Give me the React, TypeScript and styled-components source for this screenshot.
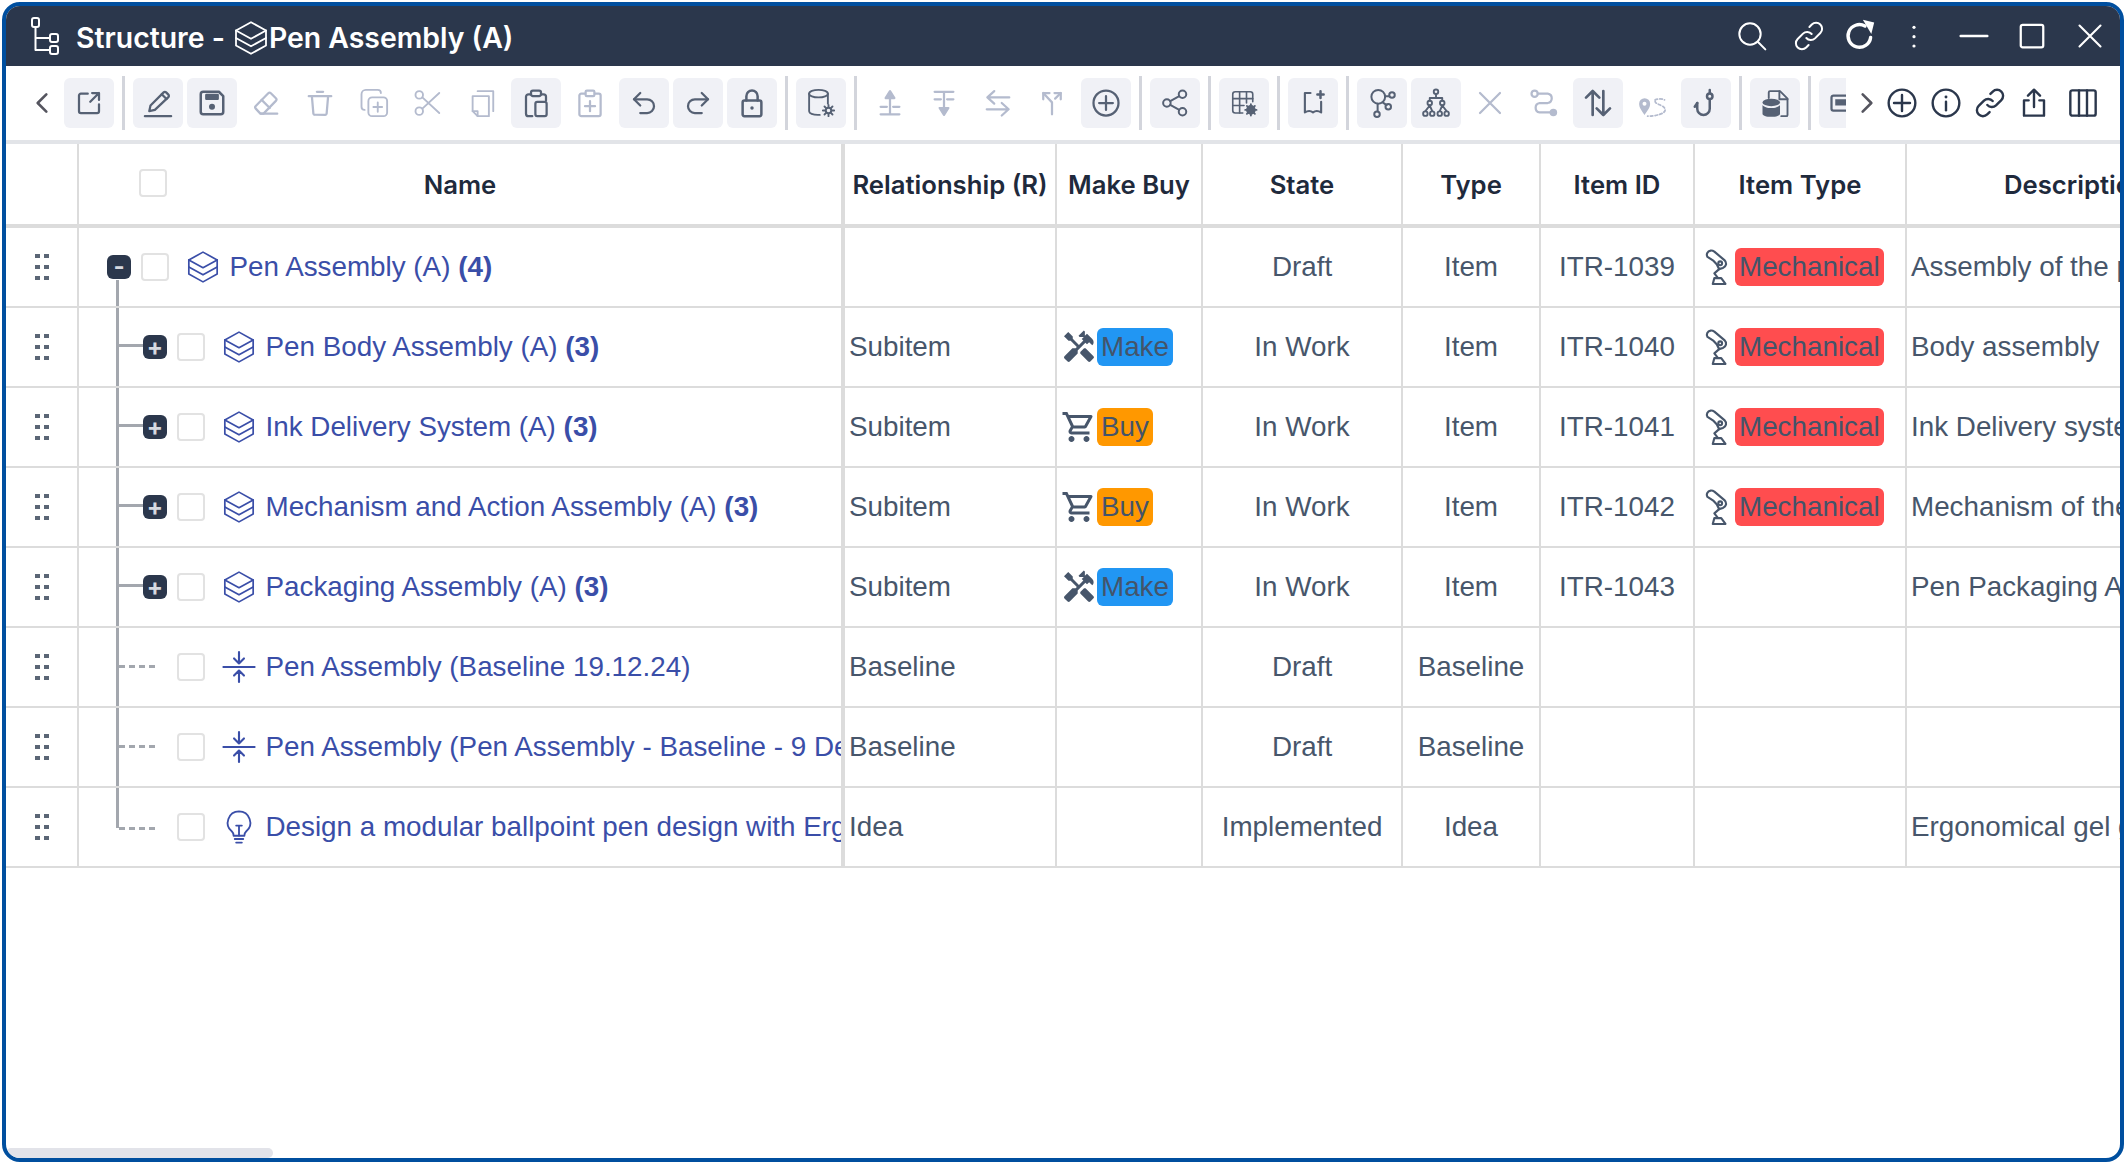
import React from 'react';
import styled, { createGlobalStyle } from 'styled-components';
import { MdHandyman, MdOutlineShoppingCart } from 'react-icons/md';

const GlobalStyle = createGlobalStyle`
  html, body { margin: 0; padding: 0; background: #fff; }
  * { box-sizing: border-box; }
`;

const Window = styled.div`
  width: 2122px;
  height: 1160px;
  margin: 2px 0 0 2px;
  border: 4px solid #004f9f;
  border-radius: 18px;
  background: #fff;
  overflow: hidden;
  position: relative;
  font-family: Inter, "Liberation Sans", sans-serif;
`;

const TitleBar = styled.div`
  height: 60px;
  background: #2b374c;
  color: #fff;
  display: flex;
  align-items: center;
  padding: 0 2px 0 24px;
`;

const TitleText = styled.div`
  display: flex;
  align-items: center;
  margin-left: 16px;
  padding-top: 3px;
  font-size: 28.4px;
  font-weight: 600;
  white-space: nowrap;
  gap: 8px;
`;

const TitleName = styled.span`
  display: flex;
  align-items: center;
`;

const TitleActions = styled.div`
  margin-left: auto;
  display: flex;
  align-items: center;
`;

const TitleAction = styled.div<{ $w: number }>`
  width: ${p => p.$w}px;
  display: flex;
  justify-content: center;
  align-items: center;
`;

const Toolbar = styled.div`
  height: 74px;
  display: flex;
  align-items: center;
`;

const BackChevron = styled.div`
  width: 58px;
  padding-left: 27px;
  color: #55555f;
  display: flex;
  align-items: center;
`;

const ToolStrip = styled.div`
  width: 1782px;
  flex: none;
  display: flex;
  align-items: center;
  gap: 4px;
  overflow: hidden;
`;

const ToolButton = styled.div<{ $active?: boolean }>`
  width: 50px;
  height: 50px;
  flex: none;
  border-radius: 6px;
  display: flex;
  align-items: center;
  justify-content: center;
  background: ${p => (p.$active ? '#f0f1f6' : 'transparent')};
  color: ${p => (p.$active ? '#566174' : '#b4bbce')};
`;

const ToolSep = styled.div`
  width: 3px;
  height: 54px;
  flex: none;
  margin: 0 4px;
  background: #d3d5dc;
`;

const RightTools = styled.div`
  display: flex;
  align-items: center;
  color: #2b374c;
`;

const NextChevron = styled.div`
  width: 26px;
  margin-left: 8px;
  display: flex;
  justify-content: center;
  color: #55555f;
`;

const RightTool = styled.div<{ $w?: number }>`
  width: ${p => p.$w ?? 44}px;
  display: flex;
  justify-content: center;
`;

const Band = styled.div`
  height: 4px;
  background: #e2e4e8;
`;

const TableArea = styled.div`
  width: 2300px;
`;

const columns = '73px 766px 212px 146px 200px 138px 154px 212px 399px';

const HeaderRow = styled.div`
  display: grid;
  grid-template-columns: ${columns};
  height: 84px;
  border-bottom: 4px solid #dcdcdc;
`;

const HeaderCell = styled.div<{ $thick?: boolean }>`
  display: flex;
  align-items: center;
  justify-content: center;
  font-size: 25.7px;
  font-weight: 600;
  color: #1f2a3c;
  white-space: nowrap;
  overflow: hidden;
  border-right: ${p => (p.$thick ? 4 : 2)}px solid #dcdcdc;
`;

const NameHeader = styled(HeaderCell)`
  display: grid;
  grid-template-columns: 1fr auto 1fr;
  align-items: center;
`;

const DescHeader = styled(HeaderCell)`
  justify-content: flex-start;
  padding-left: 97px;
  border-right: none;
`;

const Row = styled.div`
  display: grid;
  grid-template-columns: ${columns};
  height: 80px;
  border-bottom: 2px solid #dcdcdc;
`;

const Cell = styled.div<{ $align?: string }>`
  display: flex;
  align-items: center;
  justify-content: ${p => p.$align ?? 'flex-start'};
  min-width: 0;
  overflow: hidden;
  white-space: nowrap;
  font-family: "Liberation Sans", Arial, sans-serif;
  font-size: 27.8px;
  color: #47566b;
  border-right: 2px solid #dcdcdc;
`;

const HandleCell = styled(Cell)`
  justify-content: flex-start;
  padding-left: 29px;
  color: #5b6675;
`;

const NameCell = styled(Cell)<{ $depth: number }>`
  position: relative;
  border-right-width: 4px;
  padding-left: ${p => (p.$depth === 0 ? 28 : 64)}px;
`;

const PadCell = styled(Cell)`
  padding-left: 4px;
`;

const MakeCell = styled(Cell)`
  padding-left: 4px;
`;

const ItemTypeCell = styled(Cell)`
  padding-left: 9px;
  gap: 5px;
`;

const DescCell = styled(Cell)`
  padding-left: 4px;
  border-right: none;
`;

const Vertical = styled.div<{ $top: number; $h: number }>`
  position: absolute;
  left: 37px;
  top: ${p => p.$top}px;
  height: ${p => p.$h}px;
  width: 3px;
  background: #a3a7ae;
`;

const Branch = styled.div<{ $top: number; $dashed?: boolean }>`
  position: absolute;
  left: 40px;
  top: ${p => p.$top}px;
  height: 3px;
  width: ${p => (p.$dashed ? 36 : 24)}px;
  background: ${p =>
    p.$dashed
      ? 'repeating-linear-gradient(90deg, #a3a7ae 0 6px, transparent 6px 10px)'
      : '#a3a7ae'};
`;

const Expander = styled.div`
  width: 24px;
  height: 24px;
  flex: none;
  position: relative;
  z-index: 1;
  border-radius: 6px;
  background: #2b374c;
  color: #d6d9e0;
  display: flex;
  align-items: center;
  justify-content: center;
  font-family: Inter, sans-serif;
  font-size: 24px;
  font-weight: 700;
  line-height: 1;
`;

const ExpanderGap = styled.div`
  width: 24px;
  flex: none;
`;

const CheckBox = styled.div`
  width: 28px;
  height: 28px;
  flex: none;
  border: 2px solid #e2e2e2;
  border-radius: 4px;
  background: #fff;
`;

const RowCheck = styled(CheckBox)`
  margin-left: 10px;
`;

const HeaderCheck = styled(CheckBox)`
  margin: -2px 0 0 60px;
`;

const IconSlot = styled.div`
  width: 34px;
  flex: none;
  margin: 0 9.5px 0 17px;
  display: flex;
  justify-content: center;
  color: #3a4ea8;
`;

const NameLink = styled.span`
  color: #3a4ea8;
  b { font-weight: 700; }
`;

const Pill = styled.span<{ $bg: string }>`
  display: inline-flex;
  align-items: center;
  height: 38px;
  padding: 0 4px;
  border-radius: 6px;
  background: ${p => p.$bg};
  color: #44546a;
`;

const ScrollThumb = styled.div`
  position: absolute;
  left: 0;
  bottom: 0;
  width: 267px;
  height: 10px;
  border-radius: 5px;
  background: #e2e3e9;
`;

type GlyphProps = { size?: number; w?: number; children: React.ReactNode; vb?: string; sw?: number };

const Glyph = ({ size = 30, w, children, vb = '0 0 24 24', sw = 1.8 }: GlyphProps) => (
  <svg
    width={w ?? size}
    height={size}
    viewBox={vb}
    fill="none"
    stroke="currentColor"
    strokeWidth={sw}
    strokeLinecap="round"
    strokeLinejoin="round"
  >
    {children}
  </svg>
);

const dot = { fill: 'currentColor', stroke: 'none' };

const Layers = ({ size = 34 }: { size?: number }) => (
  <Glyph size={size} sw={1.2}>
    <path d="M12 1.5 22 7l-10 5.5L2 7z" />
    <path d="M2 7v5l10 5.5L22 12V7" />
    <path d="M2 12v5l10 5.5L22 17v-5" />
  </Glyph>
);

const icons: Record<string, React.ReactNode> = {
  external: (
    <Glyph>
      <path d="M11 4.5H5.5A1.5 1.5 0 0 0 4 6v12.5A1.5 1.5 0 0 0 5.5 20h13a1.5 1.5 0 0 0 1.5-1.5V13" />
      <path d="M13 11l7-7M14.5 4H20v5.5" />
    </Glyph>
  ),
  pencil: (
    <Glyph>
      <path d="M1.5 22.5h21" />
      <path d="M5 18.5l1-4.500L16.500 3.500a1.400 1.400 0 0 1 2 0l1.800 1.800a1.400 1.400 0 0 1 0 2L9.500 17.500z" />
      <path d="M15 5l3.800 3.800" />
    </Glyph>
  ),
  save: (
    <Glyph sw={2}>
      <path d="M5 3h12.500L21 6.500V19a2 2 0 0 1-2 2H5a2 2 0 0 1-2-2V5a2 2 0 0 1 2-2z" />
      <path d="M7.500 5.500h9v3h-9z" fill="currentColor" />
      <circle cx="12" cy="15" r="2.400" {...dot} />
    </Glyph>
  ),
  eraser: (
    <Glyph>
      <path d="M13.800 4.200a1.500 1.500 0 0 1 2.100 0l4 4a1.500 1.500 0 0 1 0 2.100L10 20.500H7.500l-3.700-4a1.500 1.500 0 0 1 0-2.100z" />
      <path d="M8.500 9.500l6.500 6.500M8 20.500h13" />
    </Glyph>
  ),
  trash: (
    <Glyph>
      <path d="M3 6.500h18M9.500 3h5" />
      <path d="M5.500 6.500l1.200 14a1 1 0 0 0 1 .9h8.600a1 1 0 0 0 1-.9l1.200-14" />
    </Glyph>
  ),
  copyPlus: (
    <Glyph sw={1.5}>
      <rect x="7.500" y="7.500" width="15" height="15" rx="3" />
      <path d="M4.500 17.500A2.500 2.500 0 0 1 2 15V5a3.500 3.500 0 0 1 3.500-3.500H15A2.500 2.500 0 0 1 17.500 4" />
      <path d="M15 11.500v7.500M11.500 15.200h7" />
    </Glyph>
  ),
  scissors: (
    <Glyph sw={1.5}>
      <circle cx="5" cy="5.500" r="3" />
      <circle cx="5" cy="18.500" r="3" />
      <path d="M7.500 7.500 21 20M7.500 16.500 21 4" />
    </Glyph>
  ),
  copy: (
    <Glyph sw={1.5}>
      <path d="M4.500 6.500h13v16h-9l-4-4z" />
      <path d="M8.500 22.500v-4h-4" />
      <path d="M8.500 2.500h12.500v16" />
    </Glyph>
  ),
  paste: (
    <Glyph>
      <path d="M8 5H6a2 2 0 0 0-2 2v13.500a2 2 0 0 0 2 2h3" />
      <path d="M16 5h2a2 2 0 0 1 2 2v3" />
      <rect x="8" y="2" width="8" height="4.500" rx="1.500" />
      <rect x="11.500" y="11" width="9" height="11.500" rx="1.500" />
    </Glyph>
  ),
  clipPlus: (
    <Glyph>
      <rect x="3.500" y="4.500" width="17" height="18" rx="1.500" />
      <rect x="8.500" y="2" width="7" height="4.500" rx="1" fill="#fff" />
      <path d="M12 10.500v8M8 14.500h8" />
    </Glyph>
  ),
  undo: (
    <Glyph>
      <path d="M9 14 4 9l5-5" />
      <path d="M4 9h10.500a5.500 5.500 0 0 1 0 11H9" />
    </Glyph>
  ),
  redo: (
    <Glyph>
      <path d="M15 14l5-5-5-5" />
      <path d="M20 9H9.500a5.500 5.500 0 0 0 0 11H15" />
    </Glyph>
  ),
  lock: (
    <Glyph sw={2}>
      <rect x="4.500" y="10" width="15" height="12.500" rx="1.500" />
      <path d="M7.500 10V6.500a4.500 4.500 0 0 1 9 0V10" />
      <circle cx="12" cy="16" r="1.400" {...dot} />
    </Glyph>
  ),
  dbGear: (
    <Glyph sw={1.5}>
      <ellipse cx="10" cy="4.500" rx="7.500" ry="3" />
      <path d="M2.500 4.500v14c0 1.700 3 3 7 3h1.500" />
      <path d="M17.500 4.500v8" />
      <circle cx="18" cy="18" r="2.200" />
      <path d="M18 13.500v2M18 20.500v2M13.500 18h2M20.500 18h2M14.800 14.800l1.500 1.500M19.700 19.700l1.500 1.500M14.800 21.200l1.500-1.500M19.700 16.300l1.500-1.500" />
    </Glyph>
  ),
  insertUp: (
    <Glyph>
      <path d="M12 2.500 8.500 8h7z" fill="currentColor" />
      <path d="M12 8v13M4.500 21h15M4.500 15h5M14.500 15h5" />
    </Glyph>
  ),
  insertDown: (
    <Glyph>
      <path d="M12 21.500 8.500 16h7z" fill="currentColor" />
      <path d="M12 16V3M4.500 3h15M4.500 9h5M14.500 9h5" />
    </Glyph>
  ),
  swap: (
    <Glyph>
      <path d="M9 2.500 3.500 7.500 9 12.500M3.500 7.500H21" />
      <path d="M15 12l5.500 5-5.500 5M20.500 17H3" />
    </Glyph>
  ),
  fork: (
    <Glyph>
      <path d="M5 9V4h5M19 9V4h-5" />
      <path d="M5 4l7 7.500V21M19 4l-4.500 4.500" />
    </Glyph>
  ),
  circlePlus: (
    <Glyph>
      <circle cx="12" cy="12" r="10" />
      <path d="M12 6.500v11M6.500 12h11" />
    </Glyph>
  ),
  share: (
    <Glyph sw={1.6}>
      <circle cx="18" cy="5" r="3" />
      <circle cx="5.500" cy="12" r="3" />
      <circle cx="18" cy="19" r="3" />
      <path d="M8.200 10.500l7.200-4M8.200 13.500l7.200 4" />
    </Glyph>
  ),
  gridGear: (
    <Glyph sw={1.3}>
      <path d="M11 20H5a2 2 0 0 1-2-2V5a2 2 0 0 1 2-2h12a2 2 0 0 1 2 2v6" />
      <path d="M3 8.500h16M3 14h9M8.500 3v17M14 3v9" />
      <circle cx="17.500" cy="17.500" r="3.200" fill="currentColor" />
      <path d="M17.500 13v9M13 17.500h9M14.300 14.300l6.400 6.400M14.300 20.700l6.400-6.400" strokeWidth="1.500" />
    </Glyph>
  ),
  bookmark: (
    <Glyph sw={1.7}>
      <path d="M10 4H5.500V19.500c2.500-1.500 4.500-1.500 6.500 0 2-1.500 4-1.500 6.500 0V11" />
      <path d="M18 2.500v5.500M15.500 5.200h5" strokeWidth="2" />
    </Glyph>
  ),
  graph: (
    <Glyph sw={1.6}>
      <circle cx="9" cy="7" r="5.500" />
      <circle cx="20" cy="5.500" r="2.200" />
      <circle cx="17" cy="15" r="2.200" />
      <circle cx="8" cy="21" r="2.200" />
      <path d="M14.500 6.500h3.300M12.500 11.500l3.200 2.200M8.500 12.500v6" />
    </Glyph>
  ),
  hierarchy: (
    <Glyph sw={1.5}>
      <circle cx="12" cy="3" r="1.800" />
      <circle cx="7" cy="12" r="1.800" />
      <circle cx="17" cy="12" r="1.800" />
      <circle cx="3.500" cy="20.500" r="1.800" />
      <circle cx="9" cy="20.500" r="1.800" />
      <circle cx="15" cy="20.500" r="1.800" />
      <circle cx="20.500" cy="20.500" r="1.800" />
      <path d="M12 5v3M7 10V8h10v2M7 14l-3.500 4.500M7 14l2 4.500M17 14l-2 4.500M17 14l3.500 4.500" />
    </Glyph>
  ),
  cross: (
    <Glyph>
      <path d="M4 4l16 16M20 4 4 20" />
    </Glyph>
  ),
  route: (
    <Glyph>
      <circle cx="4.500" cy="4.500" r="2.500" />
      <path d="M7 4.500h8a3.800 3.800 0 0 1 0 7.500H8.500a3.800 3.800 0 0 0 0 7.500H18" />
      <circle cx="19.500" cy="19.500" r="3" {...dot} />
    </Glyph>
  ),
  upDown: (
    <Glyph size={32} sw={2}>
      <path d="M8 21V3M3 8l5-5 5 5" />
      <path d="M16 3v18M11 16l5 5 5-5" />
    </Glyph>
  ),
  pin: (
    <Glyph sw={1.4}>
      <path d="M6 21.500C3.500 17.500 1.700 15.500 1.700 12.500a4.400 4.400 0 0 1 8.800 0c0 3-1.800 5-4.500 9z" fill="currentColor" stroke="none" />
      <circle cx="6" cy="12.500" r="1.600" fill="#fff" stroke="none" />
      <path d="M14.500 9.500c2.500-1 5.500-1 7.500 0M14.500 10.500c0 3 8 3 8 7 0 3-7 5-14 5" strokeDasharray="2 1.800" />
    </Glyph>
  ),
  hook: (
    <Glyph sw={2}>
      <path d="M15 9v7.500a5 5 0 0 1-10 0V12" />
      <path d="M5 12l-2 3" />
      <circle cx="15" cy="6.500" r="2.200" />
      <path d="M15 1.500v2.500" />
    </Glyph>
  ),
  dbDoc: (
    <Glyph sw={1.5}>
      <path d="M7 8V3.500a1 1 0 0 1 1-1h8l6 6v13a1 1 0 0 1-1 1h-4" />
      <path d="M15.500 2.500V9H22" />
      <ellipse cx="9" cy="11.500" rx="7" ry="3" fill="currentColor" stroke="none" />
      <path d="M2 13.500v7c0 1.500 3 2.500 7 2.500s7-1 7-2.500v-7c-1 1.500-4 2.500-7 2.500s-6-1-7-2.500z" fill="currentColor" stroke="none" />
    </Glyph>
  ),
  panel: (
    <Glyph sw={1.8}>
      <rect x="2" y="6" width="19" height="12" rx="1.500" />
      <rect x="5" y="9" width="16" height="5" fill="currentColor" stroke="none" />
      <path d="M24 2v3M24 19v3" />
    </Glyph>
  ),
};

const tools: (string | [string, boolean])[] = [
  ['external', true], '|',
  ['pencil', true], ['save', true], ['eraser', false], ['trash', false], ['copyPlus', false],
  ['scissors', false], ['copy', false], ['paste', true], ['clipPlus', false],
  ['undo', true], ['redo', true], ['lock', true], '|',
  ['dbGear', true], '|',
  ['insertUp', false], ['insertDown', false], ['swap', false], ['fork', false], ['circlePlus', true], '|',
  ['share', true], '|',
  ['gridGear', true], '|',
  ['bookmark', true], '|',
  ['graph', true], ['hierarchy', true], ['cross', false], ['route', false], ['upDown', true],
  ['pin', false], ['hook', true], '|',
  ['dbDoc', true], '|',
  ['panel', true],
];

const Chevron = ({ dir }: { dir: 'left' | 'right' }) => (
  <Glyph size={26} w={18} vb="0 0 14 24" sw={2.4}>
    <path d={dir === 'left' ? 'M11 4 3 12l8 8' : 'M3 4l8 8-8 8'} />
  </Glyph>
);

const DragHandle = () => (
  <svg width="14" height="26" viewBox="0 0 14 26" fill="currentColor">
    {[0, 11, 22].map(y => (
      <React.Fragment key={y}>
        <rect x="0" y={y} width="5" height="4" />
        <rect x="9" y={y} width="5" height="4" />
      </React.Fragment>
    ))}
  </svg>
);

const StructureIcon = () => (
  <svg width="30" height="38" viewBox="0 0 30 38" fill="none" stroke="#fff" strokeWidth="2" strokeLinejoin="round">
    <rect x="2" y="1" width="7" height="9" rx="2" />
    <path d="M5.500 10v23H20M5.500 21H20" />
    <rect x="20" y="17" width="8" height="8" rx="2" />
    <rect x="20" y="29" width="8" height="8" rx="2" />
  </svg>
);

const BaselineIcon = () => (
  <Glyph size={34} sw={1.5}>
    <path d="M1 12h22M12 1.500v8M8.500 6l3.500 3.500L15.500 6M12 22.500V15M8.500 18l3.500-3.500 3.500 3.500" />
  </Glyph>
);

const BulbIcon = () => (
  <Glyph size={34} sw={1.3}>
    <path d="M12 1a8 8 0 0 0-5 14.200c.8.700 1.200 1.500 1.200 3h7.600c0-1.500.4-2.300 1.200-3A8 8 0 0 0 12 1z" />
    <path d="M9 20.500h6M10 23h4M12 18v-7M10 11h4" />
  </Glyph>
);

const RobotArm = () => (
  <svg width="26" height="36" viewBox="0 0 24 34" fill="none" stroke="#47566b" strokeWidth="2" strokeLinejoin="round">
    <path d="M3 7.500C1.500 5 3 2 6 1.500c1.500-.2 2.500.3 3.500 1L19 10.500c2.500 2.500 2 6-1.500 7.500L14 19c-1-3-3-6-5.500-8z" />
    <circle cx="15" cy="13.500" r="1.800" />
    <path d="M14 19l-4.500 4 3.500 4.500" />
    <path d="M8 33l1.500-5.500h6.500L20 33z" />
  </svg>
);

type RowData = {
  name: string;
  count?: number;
  kind: 'layers' | 'baseline' | 'idea';
  depth: number;
  rel?: string;
  make?: 'Make' | 'Buy';
  state: string;
  type: string;
  id?: string;
  mech?: boolean;
  desc?: string;
};

const rows: RowData[] = [
  { name: 'Pen Assembly (A)', count: 4, kind: 'layers', depth: 0, state: 'Draft', type: 'Item', id: 'ITR-1039', mech: true, desc: 'Assembly of the pen' },
  { name: 'Pen Body Assembly (A)', count: 3, kind: 'layers', depth: 1, rel: 'Subitem', make: 'Make', state: 'In Work', type: 'Item', id: 'ITR-1040', mech: true, desc: 'Body assembly' },
  { name: 'Ink Delivery System (A)', count: 3, kind: 'layers', depth: 1, rel: 'Subitem', make: 'Buy', state: 'In Work', type: 'Item', id: 'ITR-1041', mech: true, desc: 'Ink Delivery system' },
  { name: 'Mechanism and Action Assembly (A)', count: 3, kind: 'layers', depth: 1, rel: 'Subitem', make: 'Buy', state: 'In Work', type: 'Item', id: 'ITR-1042', mech: true, desc: 'Mechanism of the pen' },
  { name: 'Packaging Assembly (A)', count: 3, kind: 'layers', depth: 1, rel: 'Subitem', make: 'Make', state: 'In Work', type: 'Item', id: 'ITR-1043', desc: 'Pen Packaging Assembly' },
  { name: 'Pen Assembly (Baseline 19.12.24)', kind: 'baseline', depth: 1, rel: 'Baseline', state: 'Draft', type: 'Baseline' },
  { name: 'Pen Assembly (Pen Assembly - Baseline - 9 Dec 24)', kind: 'baseline', depth: 1, rel: 'Baseline', state: 'Draft', type: 'Baseline' },
  { name: 'Design a modular ballpoint pen design with Ergonomic grip', kind: 'idea', depth: 1, rel: 'Idea', state: 'Implemented', type: 'Idea', desc: 'Ergonomical gel grip' },
];

const TreeLines = ({ index, row }: { index: number; row: RowData }) => {
  const last = index === rows.length - 1;
  if (index === 0) return <Vertical $top={52} $h={28} />;
  return (
    <>
      <Vertical $top={-1} $h={last ? 41 : 81} />
      <Branch $top={last ? 39 : row.count ? 36 : 37} $dashed={!row.count} />
    </>
  );
};

const App: React.FC = () => (
  <>
    <GlobalStyle />
    <Window>
      <TitleBar>
        <StructureIcon />
        <TitleText>
          Structure -
          <TitleName>
            <Layers size={36} />
            Pen Assembly (A)
          </TitleName>
        </TitleText>
        <TitleActions>
          <TitleAction $w={56}>
            <Glyph size={32} sw={1.5}>
              <circle cx="10.500" cy="10.500" r="8" />
              <path d="M16.500 16.500 22 22" />
            </Glyph>
          </TitleAction>
          <TitleAction $w={58}>
            <Glyph size={32} sw={1.5}>
              <path d="M10 13.500a4.500 4.500 0 0 0 6.500.3l4-4a4.500 4.500 0 0 0-6.400-6.400l-1.800 1.800" />
              <path d="M14 10.500a4.500 4.500 0 0 0-6.500-.3l-4 4a4.500 4.500 0 0 0 6.400 6.400l1.800-1.800" />
            </Glyph>
          </TitleAction>
          <TitleAction $w={44}>
            <Glyph size={34} sw={2.4}>
              <path d="M19.500 13a8 8 0 1 1-4-8" />
              <path d="M14 .5 22 2.500 20 10.500z" fill="#fff" stroke="none" />
            </Glyph>
          </TitleAction>
          <TitleAction $w={64}>
            <Glyph size={32}>
              <circle cx="12" cy="5.500" r="1.200" fill="#fff" stroke="none" />
              <circle cx="12" cy="12.500" r="1.200" fill="#fff" stroke="none" />
              <circle cx="12" cy="19.500" r="1.200" fill="#fff" stroke="none" />
            </Glyph>
          </TitleAction>
          <TitleAction $w={56}>
            <Glyph size={32}>
              <path d="M2 12h20" />
            </Glyph>
          </TitleAction>
          <TitleAction $w={60}>
            <Glyph size={30}>
              <rect x="3" y="3" width="18" height="18" rx="1.500" />
            </Glyph>
          </TitleAction>
          <TitleAction $w={56}>
            <Glyph size={28}>
              <path d="M3 3l18 18M21 3 3 21" />
            </Glyph>
          </TitleAction>
        </TitleActions>
      </TitleBar>

      <Toolbar>
        <BackChevron>
          <Chevron dir="left" />
        </BackChevron>
        <ToolStrip>
          {tools.map((t, i) =>
            t === '|' ? (
              <ToolSep key={i} />
            ) : (
              <ToolButton key={i} $active={(t as [string, boolean])[1]}>
                {icons[(t as [string, boolean])[0]]}
              </ToolButton>
            )
          )}
        </ToolStrip>
        <RightTools>
          <NextChevron>
            <Chevron dir="right" />
          </NextChevron>
          <RightTool>
            <Glyph size={32}>
              <circle cx="12" cy="12" r="10" />
              <path d="M12 6v12M6 12h12" />
            </Glyph>
          </RightTool>
          <RightTool>
            <Glyph size={32}>
              <circle cx="12" cy="12" r="10" />
              <path d="M12 11v6.500" />
              <circle cx="12" cy="7.500" r="1.100" fill="currentColor" stroke="none" />
            </Glyph>
          </RightTool>
          <RightTool>
            <Glyph size={32}>
              <path d="M10 13.500a4.500 4.500 0 0 0 6.500.3l4-4a4.500 4.500 0 0 0-6.400-6.400l-1.800 1.800" />
              <path d="M14 10.500a4.500 4.500 0 0 0-6.500-.3l-4 4a4.500 4.500 0 0 0 6.400 6.400l1.800-1.800" />
            </Glyph>
          </RightTool>
          <RightTool>
            <Glyph size={32}>
              <path d="M12 15V2.500M7.500 6.500 12 2l4.500 4.500" />
              <path d="M8 10H4.500v11.500h15V10H16" />
            </Glyph>
          </RightTool>
          <RightTool $w={54}>
            <Glyph size={32}>
              <rect x="2.500" y="2.500" width="19" height="19" rx="1.500" />
              <path d="M9 2.500v19M15 2.500v19" />
            </Glyph>
          </RightTool>
        </RightTools>
      </Toolbar>

      <Band />

      <TableArea>
        <HeaderRow>
          <HeaderCell />
          <NameHeader $thick>
            <HeaderCheck />
            <span>Name</span>
            <span />
          </NameHeader>
          <HeaderCell>Relationship (R)</HeaderCell>
          <HeaderCell>Make Buy</HeaderCell>
          <HeaderCell>State</HeaderCell>
          <HeaderCell>Type</HeaderCell>
          <HeaderCell>Item ID</HeaderCell>
          <HeaderCell>Item Type</HeaderCell>
          <DescHeader>Description</DescHeader>
        </HeaderRow>

        {rows.map((r, i) => (
          <Row key={r.name}>
            <HandleCell>
              <DragHandle />
            </HandleCell>
            <NameCell $depth={r.depth}>
              <TreeLines index={i} row={r} />
              {r.count ? <Expander>{r.depth === 0 ? '-' : '+'}</Expander> : <ExpanderGap />}
              <RowCheck />
              <IconSlot>
                {r.kind === 'layers' && <Layers />}
                {r.kind === 'baseline' && <BaselineIcon />}
                {r.kind === 'idea' && <BulbIcon />}
              </IconSlot>
              <NameLink>
                {r.name}
                {r.count ? <> <b>({r.count})</b></> : null}
              </NameLink>
            </NameCell>
            <PadCell>{r.rel}</PadCell>
            <MakeCell>
              {r.make === 'Make' && (
                <>
                  <MdHandyman size={36} color="#47566b" />
                  <Pill $bg="#2196f3">Make</Pill>
                </>
              )}
              {r.make === 'Buy' && (
                <>
                  <MdOutlineShoppingCart size={36} color="#47566b" />
                  <Pill $bg="#ff9800">Buy</Pill>
                </>
              )}
            </MakeCell>
            <Cell $align="center">{r.state}</Cell>
            <Cell $align="center">{r.type}</Cell>
            <Cell $align="center">{r.id}</Cell>
            <ItemTypeCell>
              {r.mech && (
                <>
                  <RobotArm />
                  <Pill $bg="#ff4d4f">Mechanical</Pill>
                </>
              )}
            </ItemTypeCell>
            <DescCell>{r.desc}</DescCell>
          </Row>
        ))}
      </TableArea>

      <ScrollThumb />
    </Window>
  </>
);

export default App;
